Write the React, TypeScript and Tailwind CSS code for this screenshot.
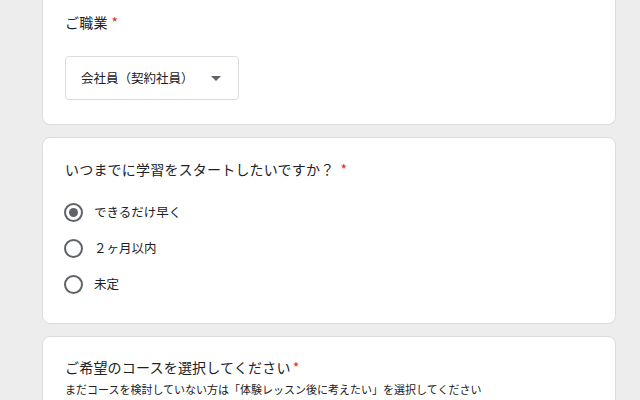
const font = { fontFamily: '"Noto Sans CJK JP", "Noto Sans", sans-serif' }

function Radio({ checked, label }: { checked?: boolean; label: string }) {
    return (
        <div className="flex items-center h-[36px] pl-[21px]">
            <div className="w-[19px] h-[19px] rounded-full border-2 border-[#5f6368] flex items-center justify-center">
                {checked && <div className="w-[9px] h-[9px] rounded-full bg-[#5f6368]" />}
            </div>
            <span className="ml-[11px] text-[12.5px] text-[#202124] leading-none">{label}</span>
        </div>
    )
}

export default function App() {
    return (
        <div className="w-[640px] h-[400px] overflow-hidden bg-[#ededed] pl-[42px]" style={font}>
            <div className="w-[574px] bg-white border border-t-0 border-[#dcdcdc] rounded-b-lg pt-[12px] pb-[24px] px-[22px]">
                <div className="h-[20px] flex items-center text-[14px] text-[#202124] tracking-[0.2px]">
                    ご職業<span className="text-[#d93025] ml-[4px]">*</span>
                </div>
                <div className="mt-[24px] w-[174px] h-[44px] border border-[#dadce0] rounded-[4px] flex items-center pl-[15px] pr-[17px]">
                    <span className="text-[12.5px] text-[#202124] flex-1">会社員（契約社員）</span>
                    <svg width="10" height="5" viewBox="0 0 10 5"><path d="M0 0 L10 0 L5 5 Z" fill="#5f6368" /></svg>
                </div>
            </div>

            <div className="mt-[12px] w-[574px] bg-white border border-[#dcdcdc] rounded-lg pt-[21px] pb-[21px]">
                <div className="px-[22px] h-[20px] flex items-center text-[14px] text-[#202124] tracking-[0.2px]">
                    いつまでに学習をスタートしたいですか？<span className="text-[#d93025] ml-[6px]">*</span>
                </div>
                <div className="mt-[15px]">
                    <Radio checked label="できるだけ早く" />
                    <Radio label="２ヶ月以内" />
                    <Radio label="未定" />
                </div>
            </div>

            <div className="mt-[12px] w-[574px] bg-white border border-[#dcdcdc] rounded-lg pt-[20px] pb-[20px] px-[22px]">
                <div className="h-[20px] flex items-center text-[14px] text-[#202124] tracking-[0.2px]">
                    ご希望のコースを選択してください<span className="text-[#d93025] ml-[2px]">*</span>
                </div>
                <div className="mt-[4px] h-[16px] flex items-center text-[11px] text-[#202124]">
                    まだコースを検討していない方は「体験レッスン後に考えたい」を選択してください
                </div>
            </div>
        </div>
    )
}
